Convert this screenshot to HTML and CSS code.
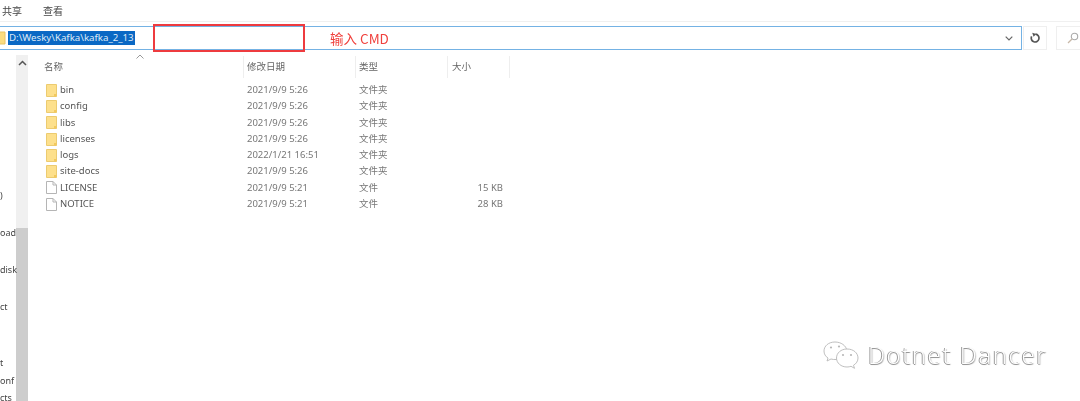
FILE: index.html
```html
<!DOCTYPE html>
<html lang="zh-CN">
<head>
<meta charset="utf-8">
<title>kafka_2_13</title>
<link rel="stylesheet" href="styles.css">
</head>
<body>
<div class="window">
  <nav class="ribbon">
    <span class="tab tab-share">共享</span>
    <span class="tab tab-view">查看</span>
  </nav>
  <div class="address-row">
    <div class="address">
      <svg class="addr-folder" width="6" height="14" viewBox="0 0 6 14"><path d="M-4 1h9v12h-9z" fill="#fbdc7f" stroke="#e8c465"/></svg>
      <span class="path">D:\Wesky\Kafka\kafka_2_13</span>
      <svg class="chevron" width="8" height="5" viewBox="0 0 8 5"><path d="M0.700 0.700L4 4l3.300-3.300" fill="none" stroke="#666" stroke-width="1.200"/></svg>
    </div>
    <div class="btn refresh">
      <svg width="12" height="12" viewBox="0 0 12 12"><path d="M6.500 2.200A3.900 3.900 0 1 1 2.600 4.400" fill="none" stroke="#555" stroke-width="1.700"/><path d="M3.200 0.800l4 1.200-2.600 2.800z" fill="#555"/></svg>
    </div>
    <div class="btn search">
      <svg width="12" height="12" viewBox="0 0 12 12"><circle cx="7.500" cy="4.500" r="3.200" fill="none" stroke="#aaa" stroke-width="1.100"/><path d="M5 7L1 11" stroke="#c8b8a8" stroke-width="1.300"/></svg>
    </div>
  </div>
  <div class="main">
    <aside class="sidebar">
      <div class="tree">
        <span class="t1">)</span>
        <span class="t2">oad</span>
        <span class="t3">disk</span>
        <span class="t4">ct</span>
        <span class="t5">t</span>
        <span class="t6">onf</span>
        <span class="t7">cts</span>
      </div>
      <div class="scrollbar">
        <svg class="scroll-up" width="9" height="6" viewBox="0 0 9 6"><path d="M1 5l3.500-3.500L8 5" fill="none" stroke="#555" stroke-width="1.500"/></svg>
        <div class="thumb"></div>
      </div>
    </aside>
    <section class="list">
      <div class="head">
        <div class="col c-name">名称<svg class="sort" width="8" height="5" viewBox="0 0 8 5"><path d="M0.500 4.500L4 1l3.500 3.500" fill="none" stroke="#999"/></svg></div>
        <div class="col c-date">修改日期</div>
        <div class="col c-type">类型</div>
        <div class="col c-size">大小</div>
      </div>
      <div class="rows">
        <div class="row"><span class="c-name name"><svg class="ico" width="11" height="13" viewBox="0 0 11 13"><path d="M0.500 0.500h10v12h-10z" fill="#fde08c" stroke="#eccb70"/><path d="M8 10h2.500v2.500H8z" fill="#f3c95e"/></svg>bin</span><span class="c-date">2021/9/9 5:26</span><span class="c-type">文件夹</span><span class="c-size"></span></div>
        <div class="row"><span class="c-name name"><svg class="ico" width="11" height="13" viewBox="0 0 11 13"><path d="M0.500 0.500h10v12h-10z" fill="#fde08c" stroke="#eccb70"/><path d="M8 10h2.500v2.500H8z" fill="#f3c95e"/></svg>config</span><span class="c-date">2021/9/9 5:26</span><span class="c-type">文件夹</span><span class="c-size"></span></div>
        <div class="row"><span class="c-name name"><svg class="ico" width="11" height="13" viewBox="0 0 11 13"><path d="M0.500 0.500h10v12h-10z" fill="#fde08c" stroke="#eccb70"/><path d="M8 10h2.500v2.500H8z" fill="#f3c95e"/></svg>libs</span><span class="c-date">2021/9/9 5:26</span><span class="c-type">文件夹</span><span class="c-size"></span></div>
        <div class="row"><span class="c-name name"><svg class="ico" width="11" height="13" viewBox="0 0 11 13"><path d="M0.500 0.500h10v12h-10z" fill="#fde08c" stroke="#eccb70"/><path d="M8 10h2.500v2.500H8z" fill="#f3c95e"/></svg>licenses</span><span class="c-date">2021/9/9 5:26</span><span class="c-type">文件夹</span><span class="c-size"></span></div>
        <div class="row"><span class="c-name name"><svg class="ico" width="11" height="13" viewBox="0 0 11 13"><path d="M0.500 0.500h10v12h-10z" fill="#fde08c" stroke="#eccb70"/><path d="M8 10h2.500v2.500H8z" fill="#f3c95e"/></svg>logs</span><span class="c-date">2022/1/21 16:51</span><span class="c-type">文件夹</span><span class="c-size"></span></div>
        <div class="row"><span class="c-name name"><svg class="ico" width="11" height="13" viewBox="0 0 11 13"><path d="M0.500 0.500h10v12h-10z" fill="#fde08c" stroke="#eccb70"/><path d="M8 10h2.500v2.500H8z" fill="#f3c95e"/></svg>site-docs</span><span class="c-date">2021/9/9 5:26</span><span class="c-type">文件夹</span><span class="c-size"></span></div>
        <div class="row"><span class="c-name name"><svg class="ico" width="11" height="13" viewBox="0 0 11 13"><path d="M0.500 0.500h6.500l3.500 3.500v8.500h-10z" fill="#fff" stroke="#b5b5b5"/><path d="M7 0.500v3.500h3.500" fill="none" stroke="#b5b5b5"/></svg>LICENSE</span><span class="c-date">2021/9/9 5:21</span><span class="c-type">文件</span><span class="c-size">15 KB</span></div>
        <div class="row"><span class="c-name name"><svg class="ico" width="11" height="13" viewBox="0 0 11 13"><path d="M0.500 0.500h6.500l3.500 3.500v8.500h-10z" fill="#fff" stroke="#b5b5b5"/><path d="M7 0.500v3.500h3.500" fill="none" stroke="#b5b5b5"/></svg>NOTICE</span><span class="c-date">2021/9/9 5:21</span><span class="c-type">文件</span><span class="c-size">28 KB</span></div>
      </div>
    </section>
  </div>
  <div class="callout"></div>
  <div class="note">输入 CMD</div>
  <div class="watermark">
    <svg width="40" height="30" viewBox="0 0 40 30"><g fill="#fff" stroke="#b8b8b8" stroke-width="0.900"><path d="M13 2C6.500 2 2 6 2 11c0 3 1.500 5.500 4 7l-1 3 4-2c1.500 0.500 3 0.500 5 0.500C20 19.500 25 15.500 25 10.500 24 5.500 19 2 13 2z"/><path d="M25 9c-6 0-10.500 4-10.500 9s4.500 9 10.500 9c1.500 0 3-0.300 4-0.700l3.500 2-1-3c2.800-1.600 4.500-4.300 4.500-7.300 0-5-4.500-9-11-9z"/></g><g fill="#b8b8b8"><circle cx="9" cy="7.500" r="1.100"/><circle cx="17" cy="6.500" r="1.100"/><circle cx="21" cy="15" r="1.100"/><circle cx="29" cy="15" r="1.100"/></g></svg>
    <span class="wm-text">Dotnet Dancer</span>
  </div>
</div>
</body>
</html>
```
FILE: styles.css
```css
html, body { margin: 0; padding: 0; background: #fff; }
.window {
  position: relative;
  width: 1080px;
  height: 401px;
  overflow: hidden;
  font-family: "Noto Sans", "Noto Sans CJK SC", sans-serif;
  font-size: 9.5px;
  color: #5a5a5a;
  filter: blur(0.3px);
}
.ribbon {
  height: 22px;
  box-sizing: border-box;
  border-bottom: 1px solid #f0f0f0;
  display: flex;
  align-items: flex-start;
  padding: 4px 0 0 2px;
  gap: 21px;
}
.tab { font-size: 10px; line-height: 14px; color: #444; font-family: "Noto Sans CJK SC", sans-serif; }
.address-row {
  height: 28px;
  display: flex;
  align-items: flex-start;
  padding: 4px 0 0 0;
  box-sizing: border-box;
}
.address {
  width: 1022px;
  height: 24px;
  flex: none;
  box-sizing: border-box;
  border: 1px solid #74b2e4;
  border-left: none;
  display: flex;
  align-items: center;
  padding: 0 8px 0 0;
}
.addr-folder { flex: none; margin-right: 2px; }
.path {
  background: #0a68c4;
  color: #dfeaf6;
  font-size: 9.7px;
  line-height: 14px;
  padding: 0 1px;
}
.chevron { margin-left: auto; }
.btn {
  width: 24px;
  height: 24px;
  flex: none;
  box-sizing: border-box;
  border: 1px solid #efefef;
  display: flex;
  align-items: center;
  justify-content: center;
}
.refresh { margin-left: 1px; }
.search { margin-left: 9px; width: 33px; justify-content: flex-start; padding-left: 10px; border-right: none; }
.main { display: flex; height: 351px; }
.sidebar { width: 28px; flex: none; display: flex; }
.tree { position: relative; width: 16px; flex: none; font-size: 9px; color: #444; }
.tree span { position: absolute; left: 0; line-height: 13px; white-space: nowrap; }
.t1 { top: 139px; }
.t2 { top: 176px; }
.t3 { top: 213px; }
.t4 { top: 250px; }
.t5 { top: 306px; }
.t6 { top: 324px; }
.t7 { top: 341px; }
.scrollbar {
  width: 12px;
  flex: none;
  margin-top: 5px;
  background: #f0f0f0;
  display: flex;
  flex-direction: column;
  align-items: center;
}
.scroll-up { margin-top: 5px; }
.thumb { margin-top: 162px; flex: 1; align-self: stretch; background: #cdcdcd; }
.list { flex: 1; padding-top: 6px; }
.head { display: flex; height: 22px; align-items: center; }
.col { position: relative; height: 22px; line-height: 20px; box-sizing: border-box; border-right: 1px solid #eee; font-family: "Noto Sans CJK SC", sans-serif; color: #666; }
.head .c-name { padding-left: 16px; }
.sort { position: absolute; left: 108px; top: -2px; }
.c-name { width: 216px; flex: none; }
.c-date { width: 112px; flex: none; padding-left: 3px; box-sizing: border-box; }
.c-type { width: 92px; flex: none; padding-left: 3px; box-sizing: border-box; }
.c-size { width: 62px; flex: none; box-sizing: border-box; }
.head .c-size { padding-left: 4px; }
.rows { padding-top: 4px; }
.row { display: flex; height: 16.3px; line-height: 16.3px; color: #777; white-space: nowrap; }
.name { display: flex; align-items: center; color: #555; padding-left: 18px; box-sizing: border-box; }
.ico { margin-right: 3px; flex: none; }
.row .c-date { padding-left: 3px; }
.row .c-size { text-align: right; padding-right: 7px; }
.row .c-type { font-family: "Noto Sans CJK SC", sans-serif; line-height: 15px; }
.callout {
  position: absolute;
  left: 153px;
  top: 24px;
  width: 152px;
  height: 28px;
  box-sizing: border-box;
  border: 2px solid #ee3b3f;
}
.note {
  position: absolute;
  left: 330px;
  top: 29px;
  font-size: 13.5px;
  line-height: 18px;
  color: #f0403c;
  font-family: "Noto Sans CJK SC", sans-serif;
}
.watermark {
  position: absolute;
  left: 822px;
  top: 340px;
  display: flex;
  align-items: center;
  gap: 6px;
}
.wm-text {
  font-family: "Open Sans", sans-serif;
  font-size: 24px;
  font-weight: 300;
  letter-spacing: 1.6px;
  color: #fff;
  line-height: 30px;
  text-shadow: -1px 0 0 #999, 0 1px 0 #999, 1px 1px 1px #ccc;
}
```
